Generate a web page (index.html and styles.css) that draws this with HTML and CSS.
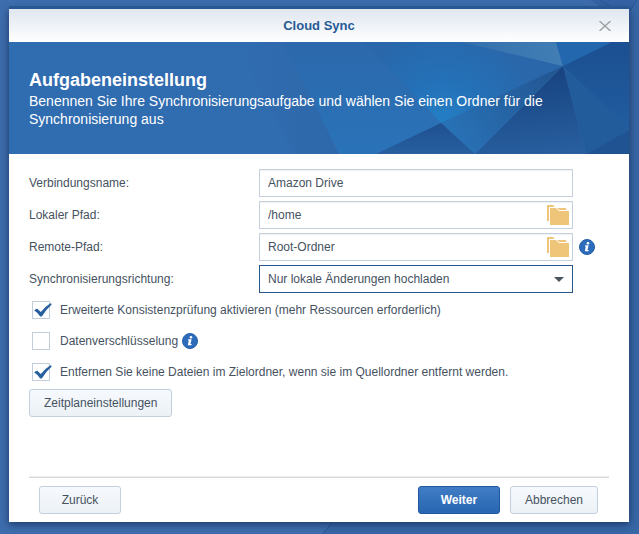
FILE: index.html
```html
<!DOCTYPE html>
<html lang="de">
<head>
<meta charset="utf-8">
<meta name="viewport" content="width=device-width, initial-scale=1">
<title>Cloud Sync</title>
<link rel="stylesheet" href="styles.css">
</head>
<body>
<svg class="symbols" aria-hidden="true">
  <symbol id="folder" viewBox="0 0 22 20">
    <path fill="#efc57a" d="M0 0h6l2.500 3H19v2h-8L8.500 2H2v14H0z"/>
    <path fill="#efc57a" d="M3 3h6l3 3h10v14H3z"/>
    <path fill="none" stroke="#fff" d="M2.500 17V2.500h6.500l3 3h10"/>
  </symbol>
  <symbol id="info" viewBox="0 0 16 16">
    <circle cx="8" cy="8" r="7.500" fill="#2c6cba" stroke="#235fa9"/>
    <circle cx="9" cy="4.200" r="1.300" fill="#fff"/>
    <path fill="#fff" d="M6.300 6.300h3.300L8.500 11h1.200l-.3 1.200H5.800L6.800 7.500h-.9z"/>
  </symbol>
  <symbol id="tick" viewBox="0 0 18 14">
    <path fill="#285f9f" d="M.3 7.500Q1.500 5.700 3.300 5.800L6.800 9Q11 3.500 16.500.2q1.500.2 1 1.500Q11.500 7 8 13.200q-1.200.8-2 0Q3.500 9.500.3 7.500z"/>
  </symbol>
</svg>
<svg class="wallpaper" viewBox="0 0 639 534" preserveAspectRatio="none" aria-hidden="true">
  <path fill="#315ca0" opacity=".6" d="M590 0h47l-8 14h-18z"/>
  <path fill="none" stroke="#2a5592" stroke-width="1" d="M600 0l16 10M637 0l-8 12M333 521l-10 13"/>
  <path fill="#2f5c9b" opacity=".35" d="M629 9l10-9v534H323l10-14h296z"/>
</svg>
<main class="dialog">
  <header class="titlebar">
    <h1>Cloud Sync</h1>
    <button type="button" class="close" aria-label="Schließen">
      <svg viewBox="0 0 12 10"><path d="M.5 0l11 10M11.500 0l-11 10" stroke="#9da2a5" stroke-width="1.500"/></svg>
    </button>
  </header>
  <section class="banner">
    <svg class="facets" viewBox="0 0 620 112" preserveAspectRatio="xMaxYMid slice" aria-hidden="true">
      <defs>
        <linearGradient id="left" x1="0" y1="0" x2="0" y2="1"><stop offset="0" stop-color="#2c68ab"/><stop offset="1" stop-color="#2a73b9"/></linearGradient>
        <linearGradient id="shade" x1="0" x2="1"><stop offset="0" stop-color="#306cb0"/><stop offset="1" stop-color="#2d68aa"/></linearGradient>
        <radialGradient id="bright" gradientUnits="userSpaceOnUse" cx="434" cy="82" r="95"><stop offset="0" stop-color="#2480c5"/><stop offset=".45" stop-color="#2471b8"/><stop offset="1" stop-color="#2967aa"/></radialGradient>
        <linearGradient id="wing" gradientUnits="userSpaceOnUse" x1="554" y1="24" x2="450" y2="100"><stop offset="0" stop-color="#22548f"/><stop offset="1" stop-color="#2871b5"/></linearGradient>
        <linearGradient id="deep" gradientUnits="userSpaceOnUse" x1="540" y1="24" x2="550" y2="112"><stop offset="0" stop-color="#17427f"/><stop offset="1" stop-color="#285f9f"/></linearGradient>
        <linearGradient id="foot" x1="0" x2="0" y1="0" y2="1"><stop offset="0" stop-color="#1f5090"/><stop offset="1" stop-color="#275f9f"/></linearGradient>
        <linearGradient id="east" x1="0" y1="0" x2="0" y2="1"><stop offset="0" stop-color="#1b5092"/><stop offset="1" stop-color="#215d9f"/></linearGradient>
        <linearGradient id="grey" x1="0" x2="1"><stop offset="0" stop-color="#3370ad"/><stop offset="1" stop-color="#427eb5"/></linearGradient>
      </defs>
      <path fill="#306cb0" d="M0 0h620v112H0z"/>
      <path fill="url(#shade)" d="M225 0h47l39 73 19 39h-45z"/>
      <path fill="url(#left)" d="M272 0h88l72 81-65 31h-37l-19-39z"/>
      <path fill="url(#bright)" d="M355 0h98l101 24-122 57z"/>
      <path fill="url(#grey)" d="M453 0h94l7 24z"/>
      <path fill="#2367ae" d="M547 0h56l-49 24z"/>
      <path fill="url(#east)" d="M603 0h17v88l-66-64z"/>
      <path fill="#235c9b" d="M554 24l66 64-43 24z"/>
      <path fill="#1f5392" d="M620 88v24h-43z"/>
      <path fill="url(#deep)" d="M554 24l23 88H466z"/>
      <path fill="url(#wing)" d="M554 24l-88 88-34-31z"/>
      <path fill="url(#foot)" d="M432 81l34 31h-99z"/>
    </svg>
    <h2>Aufgabeneinstellung</h2>
    <p>Benennen Sie Ihre Synchronisierungsaufgabe und wählen Sie einen Ordner für die Synchronisierung aus</p>
  </section>
  <form class="content">
    <div class="row">
      <label for="name">Verbindungsname:</label>
      <div class="field"><input type="text" id="name" value="Amazon Drive"></div>
    </div>
    <div class="row">
      <label for="local">Lokaler Pfad:</label>
      <div class="field"><input type="text" id="local" value="/home">
        <button type="button" class="browse" aria-label="Ordner wählen"><svg><use href="#folder"/></svg></button></div>
    </div>
    <div class="row">
      <label for="remote">Remote-Pfad:</label>
      <div class="field"><input type="text" id="remote" value="Root-Ordner">
        <button type="button" class="browse" aria-label="Ordner wählen"><svg><use href="#folder"/></svg></button></div>
      <svg class="info"><use href="#info"/></svg>
    </div>
    <div class="row">
      <label for="direction">Synchronisierungsrichtung:</label>
      <div class="field active">
        <select id="direction"><option>Nur lokale Änderungen hochladen</option></select>
        <svg class="caret" viewBox="0 0 10 5"><path fill="#4b555f" d="M0 0h10L5 5z"/></svg>
      </div>
    </div>
    <div class="checks">
      <div class="check">
        <span class="box"><input type="checkbox" id="consistency" checked><svg><use href="#tick"/></svg></span>
        <label for="consistency">Erweiterte Konsistenzprüfung aktivieren (mehr Ressourcen erforderlich)</label>
      </div>
      <div class="check">
        <span class="box"><input type="checkbox" id="encrypt"><svg><use href="#tick"/></svg></span>
        <label for="encrypt">Datenverschlüsselung</label>
        <svg class="info"><use href="#info"/></svg>
      </div>
      <div class="check">
        <span class="box"><input type="checkbox" id="keep" checked><svg><use href="#tick"/></svg></span>
        <label for="keep">Entfernen Sie keine Dateien im Zielordner, wenn sie im Quellordner entfernt werden.</label>
      </div>
    </div>
    <button type="button" class="btn">Zeitplaneinstellungen</button>
  </form>
  <footer class="footer">
    <button type="button" class="btn step">Zurück</button>
    <button type="button" class="btn step primary">Weiter</button>
    <button type="button" class="btn">Abbrechen</button>
  </footer>
</main>
</body>
</html>
```

FILE: styles.css
```css
* {
  box-sizing: border-box;
}

body {
  margin: 0;
  min-height: 100vh;
  padding: 9px 10px 12px 9px;
  display: flex;
  background: #3e6dad;
  color: #46525f;
  font: 12px/18px "Liberation Sans", Arial, sans-serif;
}

h1,
h2,
p {
  margin: 0;
}

button,
input,
select {
  font: inherit;
  color: inherit;
}

.symbols {
  position: absolute;
  width: 0;
  height: 0;
}

.wallpaper {
  position: absolute;
  inset: 0;
  width: 100%;
  height: 100%;
}

.dialog {
  position: relative;
  flex: 1;
  min-width: 0;
  display: flex;
  flex-direction: column;
  background: #fff;
  box-shadow: 0 -3px 0 #285891, 0 2px 8px rgba(10, 30, 65, .7);
}

.titlebar {
  display: grid;
  grid-template-columns: 1fr auto 1fr;
  align-items: center;
  height: 33px;
  padding: 0 18px;
  background: linear-gradient(#dfe6ef, #fff);
}

.titlebar h1 {
  grid-column: 2;
  color: #285a96;
  font-size: 13px;
  line-height: 18px;
}

.close {
  justify-self: end;
  display: flex;
  padding: 0;
  border: 0;
  background: none;
}

.close svg {
  width: 12px;
  height: 10px;
}

.banner {
  position: relative;
  min-height: 112px;
  padding: 27px 20px 24px;
  background: #306cb0;
  color: #fff;
}

.facets {
  position: absolute;
  inset: 0;
  width: 100%;
  height: 100%;
}

.banner h2,
.banner p {
  position: relative;
  max-width: 540px;
}

.banner h2 {
  font-size: 18px;
  line-height: 23px;
}

.banner p {
  font-size: 14px;
  line-height: 18px;
}

.content {
  flex: 1;
  padding: 15px 20px;
}

.row {
  display: flex;
  align-items: center;
  margin-bottom: 4px;
}

.row > label {
  width: 230px;
}

.row > .info {
  margin-left: 6px;
}

.field {
  position: relative;
  display: flex;
  align-items: center;
  width: 314px;
  height: 28px;
  border: 1px solid #c5d0dc;
  box-shadow: inset 0 1px 1px #eef0f2;
}

.field.active {
  border-color: #27568e;
  box-shadow: none;
}

.field input,
.field select {
  flex: 1;
  min-width: 0;
  height: 26px;
  padding: 0 8px;
  border: 0;
  outline: 0;
  background: none;
  appearance: none;
}

.browse {
  display: flex;
  padding: 0;
  margin-right: 3px;
  border: 0;
  background: none;
}

.browse svg {
  width: 22px;
  height: 20px;
}

.caret {
  position: absolute;
  right: 8px;
  width: 10px;
  height: 5px;
  pointer-events: none;
}

.info {
  flex: none;
  width: 16px;
  height: 16px;
}

.checks {
  display: grid;
  gap: 13px;
  padding: 4px 0 8px 3px;
}

.check {
  display: flex;
  align-items: center;
  height: 18px;
}

.check label {
  margin-left: 10px;
}

.check .info {
  margin-left: 4px;
}

.box {
  position: relative;
  display: flex;
}

.box input {
  width: 18px;
  height: 18px;
  margin: 0;
  border: 1px solid #c3cedb;
  background: #fff;
  appearance: none;
}

.box svg {
  position: absolute;
  top: 2px;
  left: 2px;
  width: 18px;
  height: 14px;
  pointer-events: none;
  visibility: hidden;
}

.box input:checked + svg {
  visibility: visible;
}

.btn {
  height: 28px;
  padding: 0 14px;
  border: 1px solid #c2cfdc;
  border-radius: 3px;
  background: linear-gradient(#f6fafe, #ecf1f6);
}

.btn.step {
  width: 82px;
}

.btn.primary {
  margin-left: auto;
  border-color: #1f579d;
  background: linear-gradient(#407dc5, #2866b2);
  color: #fff;
  font-weight: bold;
}

.footer {
  display: flex;
  gap: 10px;
  margin: 0 20px;
  padding: 8px 11px 8px 10px;
  border-top: 1px solid #d8d9da;
  box-shadow: 0 -1px 0 #eeeeef;
}
```
